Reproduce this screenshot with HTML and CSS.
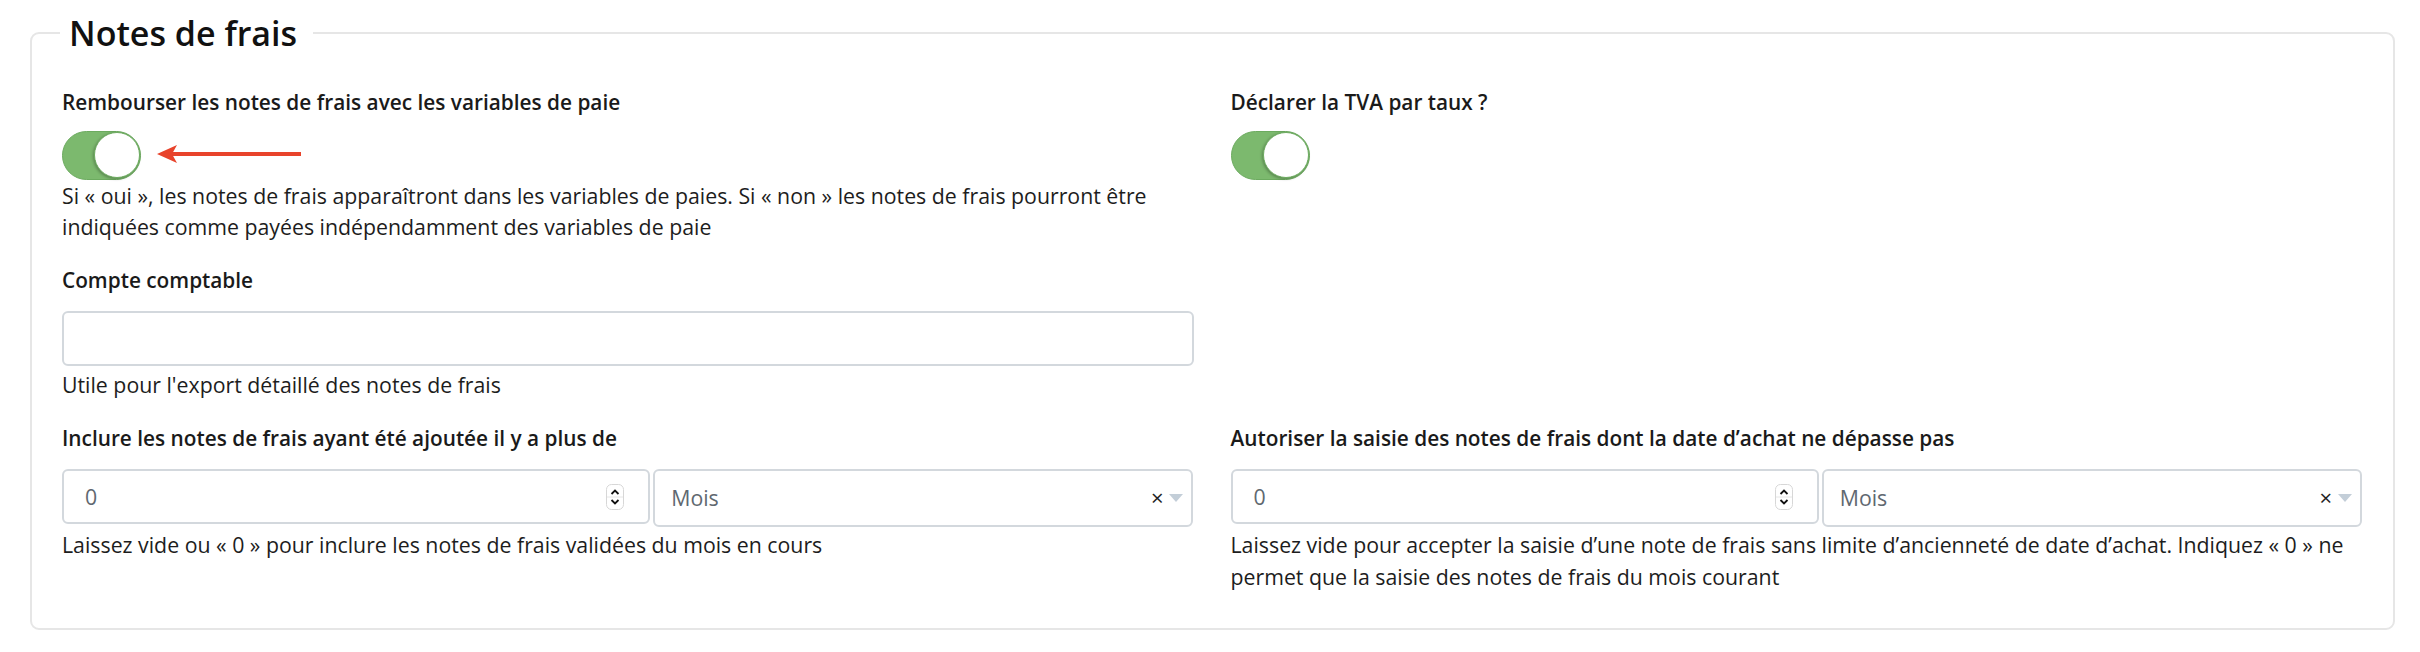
FILE: index.html
```html
<!DOCTYPE html>
<html lang="fr">
<head>
<meta charset="utf-8">
<title>Notes de frais</title>
<link rel="stylesheet" href="styles.css">
</head>
<body>
<fieldset class="panel">
  <legend class="panel-title">Notes de frais</legend>
  <div class="form-grid">
    <div class="group">
      <div class="label">Rembourser les notes de frais avec les variables de paie</div>
      <div class="toggle-row">
        <span class="toggle"><span class="knob"></span></span>
        <svg class="arrow" width="146" height="20" viewBox="0 0 146 20"><path d="M14 10 H144" stroke="#e8432b" stroke-width="4" fill="none"/><path d="M0 10 L20 1 L15 10 L20 19 Z" fill="#e8432b"/></svg>
      </div>
      <div class="help">Si « oui », les notes de frais apparaîtront dans les variables de paies. Si « non » les notes de frais pourront être<br>indiquées comme payées indépendamment des variables de paie</div>
    </div>
    <div class="group">
      <div class="label">Déclarer la TVA par taux ?</div>
      <div class="toggle-row">
        <span class="toggle"><span class="knob"></span></span>
      </div>
    </div>

    <div class="group">
      <div class="label">Compte comptable</div>
      <div class="field field-text"></div>
      <div class="help">Utile pour l'export détaillé des notes de frais</div>
    </div>
    <div class="group"></div>

    <div class="group">
      <div class="label">Inclure les notes de frais ayant été ajoutée il y a plus de</div>
      <div class="pair">
        <div class="field field-number"><span class="value">0</span><svg class="spin" width="18" height="26" viewBox="0 0 18 26"><rect x="0.5" y="0.5" width="17" height="25" rx="5" fill="#fff" stroke="#d7d7d7"/><path d="M5.5 10 L9 6.5 L12.5 10" stroke="#111" stroke-width="1.8" fill="none"/><path d="M5.5 16 L9 19.5 L12.5 16" stroke="#111" stroke-width="1.8" fill="none"/><path d="M1 13 H17" stroke="#e6e6e6" stroke-width="1"/></svg></div>
        <div class="field field-select"><span class="value">Mois</span><span class="clear">×</span><span class="caret"></span></div>
      </div>
      <div class="help">Laissez vide ou « 0 » pour inclure les notes de frais validées du mois en cours</div>
    </div>
    <div class="group">
      <div class="label">Autoriser la saisie des notes de frais dont la date d’achat ne dépasse pas</div>
      <div class="pair">
        <div class="field field-number"><span class="value">0</span><svg class="spin" width="18" height="26" viewBox="0 0 18 26"><rect x="0.5" y="0.5" width="17" height="25" rx="5" fill="#fff" stroke="#d7d7d7"/><path d="M5.5 10 L9 6.5 L12.5 10" stroke="#111" stroke-width="1.8" fill="none"/><path d="M5.5 16 L9 19.5 L12.5 16" stroke="#111" stroke-width="1.8" fill="none"/><path d="M1 13 H17" stroke="#e6e6e6" stroke-width="1"/></svg></div>
        <div class="field field-select"><span class="value">Mois</span><span class="clear">×</span><span class="caret"></span></div>
      </div>
      <div class="help">Laissez vide pour accepter la saisie d’une note de frais sans limite d’ancienneté de date d’achat. Indiquez « 0 » ne<br>permet que la saisie des notes de frais du mois courant</div>
    </div>
  </div>
</fieldset>
</body>
</html>
```
FILE: styles.css
```css
html, body {
  margin: 0;
  padding: 0;
  background: #ffffff;
}
body {
  font-family: "Open Sans", "Liberation Sans", sans-serif;
  font-size: 21.3px;
  line-height: 31.5px;
  color: #1b1b1b;
  padding: 12px 25px 0 30px;
}
.panel {
  margin: 0;
  border: 2px solid #e6e6e6;
  border-radius: 9px;
  padding: 33px 31px 36px 30px;
}
.panel-title {
  font-size: 34px;
  line-height: 42px;
  font-weight: 600;
  color: #111;
  padding: 0 16px 0 9px;
  margin-left: -2px;
}
.form-grid {
  display: grid;
  grid-template-columns: 1fr 1fr;
  column-gap: 37px;
  row-gap: 22px;
}
.label {
  font-size: 20.8px;
  font-weight: 600;
  color: #1a1a1a;
}
.toggle-row {
  display: flex;
  align-items: center;
  margin-top: 12px;
}
.toggle {
  display: flex;
  justify-content: flex-end;
  align-items: center;
  box-sizing: border-box;
  width: 79px;
  height: 49px;
  border-radius: 25px;
  background: #7cb96e;
  border: 1px solid #6cab5f;
}
.knob {
  width: 46px;
  height: 46px;
  border-radius: 50%;
  background: #fff;
  box-shadow: -1px 1px 3px rgba(0,0,0,0.28);
  border: 1px solid #6cab5f;
  box-sizing: border-box;
}
.arrow {
  margin-left: 16px;
  margin-top: -2px;
}
.help {
  font-weight: 400;
  color: #1d1d1d;
}
.field {
  box-sizing: border-box;
  height: 55px;
  border: 2px solid #d3d8dd;
  border-radius: 6px;
  background: #fff;
  display: flex;
  align-items: center;
  color: #606870;
}
.field-text {
  margin-top: 15px;
  margin-bottom: 3px;
}
.pair {
  display: grid;
  grid-template-columns: 588fr 540fr;
  column-gap: 3px;
  margin-top: 15px;
  margin-bottom: 2px;
}
.field-number {
  padding: 0 24px 0 21px;
  justify-content: space-between;
}
.field-select {
  height: 58px;
  padding: 0 8px 0 16px;
}
.field-select .value {
  flex: 1;
}
.clear {
  color: #222;
  font-size: 22px;
  margin-right: 6px;
}
.caret {
  width: 0;
  height: 0;
  border-left: 7px solid transparent;
  border-right: 7px solid transparent;
  border-top: 8px solid #c3ced8;
}
```
